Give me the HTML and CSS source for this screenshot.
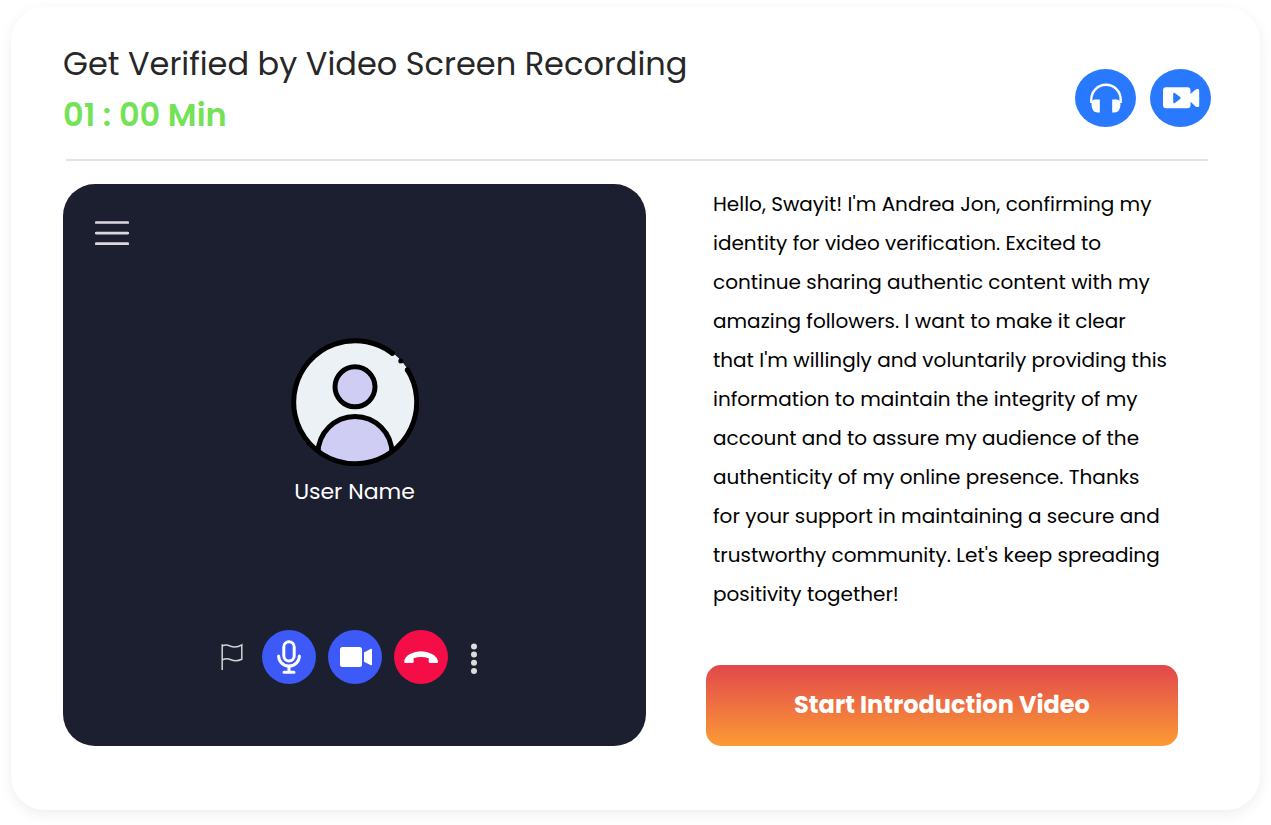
FILE: index.html
```html
<!DOCTYPE html>
<html lang="en">
<head>
<meta charset="utf-8">
<title>Video Verification</title>
<link rel="stylesheet" href="styles.css">
</head>
<body>
<main class="card">
  <header class="header">
    <div class="heading">
      <h1 class="title">Get Verified by Video Screen Recording</h1>
      <p class="timer">01 : 00 Min</p>
    </div>
    <div class="actions">
      <button class="round" aria-label="Audio">
        <svg width="61" height="58" viewBox="0 0 61 58"><path d="M16.300 34V30.500A14.700 14.700 0 0 1 45.700 30.500V34" fill="none" stroke="#fff" stroke-width="2.400"/><path d="M24.800 30.600V43.500H22.500Q17 43 16.600 36.500V33Q17.500 30.600 20.500 30.600ZM37.200 30.600V43.500H39.500Q45 43 45.400 36.500V33Q44.500 30.600 41.500 30.600Z" fill="#fff"/></svg>
      </button>
      <button class="round" aria-label="Video">
        <svg width="61" height="58" viewBox="0 0 61 58"><path fill="#fff" fill-rule="evenodd" d="M16 18.300H37.500Q40.500 18.300 40.500 21.300V25L45.700 20.500Q47 19.600 48.200 20Q49.200 20.500 49.200 21.500V36.500Q49.200 37.700 48.200 38Q47 38.300 45.700 37.500L40.500 32.800V36.300Q40.500 39.300 37.500 39.300H16Q13 39.300 13 36.300V21.300Q13 18.300 16 18.300ZM23.200 24.800V33Q23.200 34.800 24.800 33.900L30.200 30Q31.200 29 30.200 28L24.800 24Q23.200 23.200 23.200 24.800Z"/></svg>
      </button>
    </div>
  </header>
  <div class="content">
    <section class="call">
      <svg class="menu" width="34" height="25" viewBox="0 0 34 25"><path d="M1.200 1.500H32.800M1.200 12.100H32.800M1.200 22.700H32.800" stroke="#d9d9dc" stroke-width="2.700" stroke-linecap="round"/></svg>
      <div class="user">
        <svg class="avatar" width="128" height="128" viewBox="0 0 128 128">
          <defs><clipPath id="disc"><circle cx="64" cy="64" r="62"/></clipPath></defs>
          <circle cx="64" cy="64" r="62" fill="#ebf1f4"/>
          <g clip-path="url(#disc)"><path d="M27 130V115.500A37 37 0 0 1 101 115.500V130Z" fill="#cfcdf4" stroke="#000" stroke-width="5"/></g>
          <circle cx="64" cy="48.800" r="20" fill="#cfcdf4" stroke="#000" stroke-width="5"/>
          <path d="M116.500 31.900A61.500 61.500 0 1 1 101.300 15.200" fill="none" stroke="#000" stroke-width="5" stroke-linecap="round"/>
          <path d="M104 16L117 29L125 22L111 9Z" fill="#1c1f2f"/>
          <path d="M103 17L115.500 30.500L112.500 30L102.500 20Z" fill="#ebf1f4"/>
          <circle cx="101.300" cy="15.200" r="2.500"/><circle cx="109.800" cy="22.900" r="2.500"/><circle cx="116.300" cy="31.900" r="2.500"/>
        </svg>
        <p class="name">User Name</p>
      </div>
      <div class="controls">
        <svg class="flag" width="22" height="28" viewBox="0 0 22 28"><path d="M1.200 27V1.200M1.200 3Q5 1.200 9 3Q15 5.300 20.800 1.800V16.200Q15 19 10 16.700Q5.500 14.600 1.200 17" fill="none" stroke="#d2d3d8" stroke-width="1.500"/></svg>
        <button class="control" aria-label="Microphone">
          <svg width="54" height="54" viewBox="0 0 54 54" fill="none" stroke="#fff" stroke-width="3" stroke-linecap="round"><rect x="21.800" y="11.700" width="10.400" height="19.300" rx="5.200"/><path d="M16.600 26A10.400 10 0 0 0 37.400 26M27 36.500V42M22 42.300H32"/></svg>
        </button>
        <button class="control" aria-label="Camera">
          <svg width="54" height="54" viewBox="0 0 54 54" fill="#fff"><rect x="12" y="17" width="22" height="20" rx="2.500"/><path d="M36 22.500L42.500 19Q44 18.300 44 20V34.200Q44 35.800 42.500 35L36 31.800Z"/></svg>
        </button>
        <button class="control end" aria-label="End call">
          <svg width="54" height="54" viewBox="0 0 54 54" fill="#fff"><path d="M10.200 31.500Q10.500 27 16 24Q21 21.200 27 21.200Q33 21.200 38 24Q43.500 27 44 31.500Q44 33 42.800 33H36Q34.700 33 34.700 31.800V28.200Q27 25.800 19.600 28.200V31.800Q19.600 33 18.300 33H11.500Q10.200 33 10.200 31.500Z"/></svg>
        </button>
        <svg class="more" width="6" height="32" viewBox="0 0 6 32" fill="#dcdcdc"><circle cx="3" cy="3.500" r="3"/><circle cx="3" cy="11.600" r="3"/><circle cx="3" cy="19.800" r="3"/><circle cx="3" cy="27.900" r="3"/></svg>
      </div>
    </section>
    <section class="script">
      <p class="speech">
        Hello, Swayit! I'm Andrea Jon, confirming my<br>
        identity for video verification. Excited to<br>
        continue sharing authentic content with my<br>
        amazing followers. I want to make it clear<br>
        that I'm willingly and voluntarily providing this<br>
        information to maintain the integrity of my<br>
        account and to assure my audience of the<br>
        authenticity of my online presence. Thanks<br>
        for your support in maintaining a secure and<br>
        trustworthy community. Let's keep spreading<br>
        positivity together!
      </p>
      <button class="start">Start Introduction Video</button>
    </section>
  </div>
</main>
</body>
</html>
```
FILE: styles.css
```css
* { box-sizing: border-box; }
body { margin: 0; height: 825px; padding: 7px 0 0 11px; background: #fff; font-family: Poppins, Inter, sans-serif; }
h1, p { margin: 0; font-weight: 400; }
button { border: 0; padding: 0; font: inherit; }
svg { display: block; flex: none; }
.card { width: 1249px; height: 803px; padding: 33px 49px 0 52px; border-radius: 34px; background: #fff; box-shadow: 0 4px 14px rgba(0, 0, 0, .07); }
.header { display: flex; justify-content: space-between; height: 121px; margin: 0 3px; border-bottom: 2px solid #e2e2e2; }
.heading { margin-left: -3px; white-space: nowrap; }
.title { font-size: 32px; line-height: 48px; color: #272727; }
.timer { margin-top: 3px; font-size: 32px; line-height: 48px; font-weight: 600; color: #73e257; }
.actions { display: flex; gap: 14px; margin: 29px -3px 0 0; }
.round { width: 61px; height: 58px; border-radius: 50%; background: #2979ff; }
.content { display: flex; gap: 60px; margin-top: 23px; }
.call { display: flex; flex-direction: column; width: 583px; height: 562px; padding: 37px 32px 0; border-radius: 32px; background: #1c1f2f; }
.user { display: flex; flex-direction: column; align-items: center; margin-top: 92px; }
.name { margin-top: 10px; font-size: 22px; line-height: 32px; color: #fff; white-space: nowrap; }
.controls { display: flex; align-items: center; margin: 122px 0 0 126px; }
.control { width: 54px; height: 54px; margin-right: 12px; border-radius: 50%; background: #3d5af8; }
.flag { margin-right: 19px; }
.end { margin-right: 23px; background: #f50d48; }
.more { margin-top: 4px; }
.script { width: 472px; }
.speech { height: 481px; padding: 1px 0 0 7px; font-size: 20px; line-height: 39px; color: #000; white-space: nowrap; }
.start { width: 472px; height: 81px; padding-bottom: 2px; border-radius: 15px; background: linear-gradient(#e2474c, #fb9b34); color: #fff; font-size: 24px; font-weight: 700; white-space: nowrap; }
```
